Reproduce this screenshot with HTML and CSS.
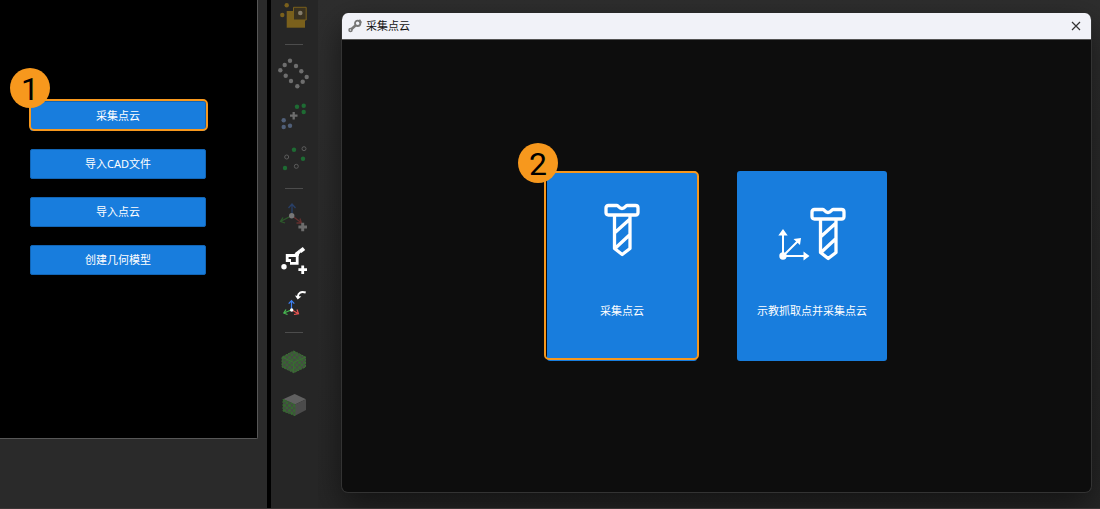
FILE: index.html
```html
<!DOCTYPE html>
<html lang="zh-CN">
<head>
<meta charset="utf-8">
<title>采集点云</title>
<link rel="stylesheet" href="styles.css">
</head>
<body>
<svg class="defs" aria-hidden="true">
  <defs>
    <symbol id="screw" viewBox="0 0 36 54">
      <g fill="none" stroke="#fff" stroke-width="3.300" stroke-linejoin="round">
        <path d="M4.5 2.5H13C14.5 2.500 15 5.500 18 5.500S21.500 2.500 23 2.500H31.500Q34 2.500 34 5V9.500Q34 12 31.500 12H4.500Q2 12 2 9.500V5Q2 2.500 4.500 2.500Z"/>
        <path d="M10.500 12V45.500L18.200 51.500L26 45.500V12M11 29.500L26 16M11.500 45L26 31.500"/>
      </g>
    </symbol>
    <pattern id="mesh" width="5" height="5" patternUnits="userSpaceOnUse">
      <circle cx="1.500" cy="1.500" r="1.500" fill="#35692f"/>
      <circle cx="4" cy="4" r="1.300" fill="#35692f"/>
    </pattern>
  </defs>
</svg>
<div class="app">
  <aside class="sidebar">
    <nav class="model-panel">
      <div class="marked">
        <button class="action" type="button">采集点云</button>
        <span class="badge">1</span>
      </div>
      <button class="action" type="button">导入CAD文件</button>
      <button class="action" type="button">导入点云</button>
      <button class="action" type="button">创建几何模型</button>
    </nav>
  </aside>
  <div class="toolbar" role="toolbar">
    <button class="tool" type="button" aria-label="选择">
      <svg viewBox="0 0 32 32"><g fill="#7a601c"><circle cx="8.700" cy="5.300" r="2.200"/><circle cx="4.300" cy="15" r="2.200"/><path d="M8.700 11H27V27.700H8.700Z"/></g><path d="M15.500 7.300H28.200V20H15.500Z" fill="#3a3220" stroke="#7a601c"/><circle cx="22.300" cy="13" r="2.300" fill="#857d6c"/></svg>
    </button>
    <hr class="rule">
    <button class="tool" type="button" aria-label="点云轮廓">
      <svg viewBox="0 0 32 32" fill="#6e6e6e"><circle cx="12" cy="2.700" r="2.200"/><circle cx="6.700" cy="7" r="2.200"/><circle cx="2.300" cy="12.300" r="2.200"/><circle cx="7.700" cy="17.700" r="2.200"/><circle cx="13" cy="23" r="2.200"/><circle cx="19.300" cy="28.300" r="2.200"/><circle cx="24.700" cy="23.700" r="2.200"/><circle cx="28.700" cy="19" r="2.200"/><circle cx="23.300" cy="13.300" r="2.200"/><circle cx="18" cy="8" r="2.200"/></svg>
    </button>
    <button class="tool" type="button" aria-label="合并点云">
      <svg viewBox="0 0 32 32"><g fill="#1e6b33"><circle cx="19" cy="5.700" r="2.200"/><circle cx="25.700" cy="4.700" r="2.200"/><circle cx="25.700" cy="11" r="2.200"/></g><g fill="#505f78"><circle cx="5.700" cy="19.300" r="2.200"/><circle cx="5.700" cy="26" r="2.200"/><circle cx="12" cy="24.700" r="2.200"/></g><path d="M15.700 11V18.500M12 14.700H19.500" stroke="#6e6e6e" stroke-width="2.300"/></svg>
    </button>
    <button class="tool" type="button" aria-label="点云采样">
      <svg viewBox="0 0 32 32"><g fill="#1e6b33"><circle cx="16" cy="5.700" r="2.200"/><circle cx="25" cy="14.700" r="2.200"/><circle cx="7" cy="24" r="2.200"/></g><g fill="none" stroke="#5c5c5c"><circle cx="26" cy="4.700" r="2"/><circle cx="8.700" cy="13" r="2"/><circle cx="18.300" cy="22.300" r="2"/></g></svg>
    </button>
    <hr class="rule">
    <button class="tool" type="button" aria-label="添加位姿">
      <svg viewBox="0 0 32 32" fill="none" stroke-width="1.300"><path d="M14 13V2M10.500 6L14 2L17.500 6" stroke="#293f66"/><path d="M13 14L2.500 19.500M5 15.500L2.500 19.500L7 21" stroke="#2d5a2b"/><path d="M15 14.500L23 20.500M22 16.500L23.500 21L18.500 21" stroke="#65302f"/><circle cx="13.700" cy="13.700" r="2.700" fill="#777"/><path d="M24.700 20.700V29.300M20.400 25H29" stroke="#6c6c6c" stroke-width="3"/></svg>
    </button>
    <button class="tool" type="button" aria-label="添加机器人位姿">
      <svg viewBox="0 0 32 32" fill="none" stroke="#fff" stroke-width="2.800"><path d="M13 15.500H9.200V10.500H19M19.200 9V18.300H12"/><path d="M17 9L20 11L21.500 7L18 7.500Z" fill="#fff" stroke-width="1"/><path d="M18.500 9L22 6" stroke-width="3"/><path d="M22 6.500L26 3.500" stroke-width="4"/><circle cx="6" cy="21.700" r="2.700" fill="#fff" stroke="none"/><path d="M24.700 20.400V29M20.400 24.700H29"/></svg>
    </button>
    <button class="tool" type="button" aria-label="调整坐标系">
      <svg viewBox="0 0 32 32" fill="none" stroke-width="1.200"><path d="M13.500 21V13M10.700 15.700L13.500 12.700L16.300 15.700" stroke="#3c80f4"/><path d="M13 22L6 25M8 21.500L5.800 25L9.500 26.500" stroke="#48b951"/><path d="M14 22L20 25.500M19 21.500L20.500 25.700L16 26.500" stroke="#e65451"/><circle cx="13.700" cy="22" r="1.700" fill="#fff"/><path d="M27.700 4.500Q20.500 2.300 19.700 9" stroke="#fff" stroke-width="2"/><path d="M17 7.500L19.700 11.500L23.300 8.500Z" fill="#fff"/></svg>
    </button>
    <hr class="rule">
    <button class="tool" type="button" aria-label="体素模型">
      <svg viewBox="0 0 32 32"><path d="M15.700 5L27.500 11V21L15.700 26.700L4 21V11Z" fill="#454d43"/><path d="M15.700 5L27.500 11V21L15.700 26.700L4 21V11Z" fill="url(#mesh)" stroke="#3b6e34" stroke-dasharray="2 1"/><path d="M4 11L15.700 16.500L27.500 11M15.700 16.500V26.500" fill="none" stroke="#3b6e34"/></svg>
    </button>
    <button class="tool" type="button" aria-label="表面模型">
      <svg viewBox="0 0 32 32"><path d="M16.700 5L28 10.300L17 15.500L5 10.300Z" fill="#606060"/><path d="M28 10.300V21L17 26.700V15.500Z" fill="#4b4b4b"/><path d="M5 10.300L17 15.500V26.700L5 22Z" fill="#434b42"/><path d="M5 10.300L17 15.500V26.700L5 22Z" fill="url(#mesh)" stroke="#35692f" stroke-dasharray="2 1"/></svg>
    </button>
  </div>
  <main class="workspace">
    <section class="dialog" role="dialog" aria-labelledby="dialog-title">
      <header class="titlebar">
        <svg class="title-icon" viewBox="0 0 14 14" fill="none" stroke="#777"><circle cx="9.700" cy="4.300" r="2.700" stroke-width="1.800"/><path d="M11 1L13 4M7.500 6.500L3 10.500" stroke-width="2.500"/><circle cx="2.500" cy="11" r="1.500" stroke-width="1.500"/></svg>
        <h1 class="title" id="dialog-title">采集点云</h1>
        <button class="close" type="button" aria-label="关闭"><svg viewBox="0 0 10 10"><path d="M1 1L9 9M9 1L1 9" fill="none" stroke="#333" stroke-width="1.200"/></svg></button>
      </header>
      <div class="choices">
        <div class="marked">
          <button class="card" type="button">
            <svg class="card-icon" viewBox="0 0 68 60"><use href="#screw" x="16" y="0" width="36" height="54"/></svg>
            <span>采集点云</span>
          </button>
          <span class="badge">2</span>
        </div>
        <button class="card" type="button">
          <svg class="card-icon" viewBox="0 0 68 60"><use href="#screw" x="32" y="4" width="36" height="54"/><g fill="#fff" stroke="none"><circle cx="5" cy="53" r="3.700"/><path d="M5 26L9.700 32.500H.3ZM31.500 53L25.500 57.500V48.500ZM23 35L22 42L15.500 36Z"/></g><path d="M5 53V31M5 53H27M5 53L20 38" fill="none" stroke="#fff" stroke-width="2"/></svg>
          <span>示教抓取点并采集点云</span>
        </button>
      </div>
    </section>
  </main>
</div>
</body>
</html>
```

FILE: styles.css
```css
* {
  box-sizing: border-box;
}

body {
  margin: 0;
  background: #2a2a2a;
  color: #fff;
  font: 11px/16px "Noto Sans", "Noto Sans CJK SC", sans-serif;
}

button {
  border: 0;
  padding: 0;
  background: none;
  color: inherit;
  font: inherit;
}

svg {
  display: block;
}

.defs {
  position: absolute;
  width: 0;
  height: 0;
}

.app {
  display: flex;
  min-height: 100vh;
  border-bottom: 1px solid #3a3535;
}

.sidebar {
  flex: none;
  width: 271px;
  padding: 0 9px 69px 0;
  border-right: 4px solid #000;
  background: #2a2a2a;
  display: flex;
}

.model-panel {
  flex: 1;
  display: flex;
  flex-direction: column;
  gap: 18px;
  padding: 101px 51px 0 30px;
  border: solid #575757;
  border-width: 0 1px 1px 0;
  border-bottom-right-radius: 2px;
  background: #000;
}

.action {
  height: 30px;
  border: 1px solid #1265b5;
  border-radius: 2px;
  background: #187ddd;
}

.marked {
  position: relative;
  display: grid;
}

.marked::after {
  content: "";
  position: absolute;
  inset: -2px -2px 0 -1px;
  border: 2px solid #f7981d;
  border-radius: 5px;
}

.badge {
  position: absolute;
  z-index: 1;
  top: -33px;
  left: -20px;
  width: 40px;
  height: 40px;
  border-radius: 50%;
  background: #f7981d;
  color: #000;
  font: 32px/42px Roboto, sans-serif;
  text-align: center;
}

.toolbar {
  flex: none;
  width: 47px;
  padding-right: 1px;
  display: flex;
  flex-direction: column;
  align-items: center;
  gap: 11px;
  background: #262626;
}

.tool {
  width: 32px;
  height: 32px;
}

.rule {
  width: 18px;
  height: 1px;
  margin: 1px 0 2px;
  border: 0;
  background: #4c4c4c;
}

.workspace {
  flex: 1;
  display: flex;
  padding: 13px 8px 15px 23px;
  overflow: hidden;
  background: linear-gradient(#2e2e2e, #262626);
}

.dialog {
  flex: 1;
  display: flex;
  flex-direction: column;
  border: 1px solid #333;
  border-top: 0;
  border-radius: 7px;
  overflow: hidden;
  background: #0d0d0d;
  box-shadow: 0 12px 32px rgba(0, 0, 0, 0.5);
}

.titlebar {
  display: flex;
  align-items: center;
  gap: 4px;
  height: 27px;
  padding: 0 10px 0 6px;
  border-bottom: 1px solid #555;
  background: #f1f2f8;
  color: #111;
}

.title-icon {
  width: 14px;
  height: 14px;
}

.title {
  flex: 1;
  margin: 0;
  font: inherit;
}

.close svg {
  width: 10px;
  height: 10px;
}

.choices {
  flex: 1;
  display: flex;
  align-items: center;
  justify-content: center;
  gap: 40px;
  padding-left: 1px;
}

.choices .marked::after {
  inset: 0 -2px 1px -3px;
}

.choices .badge {
  top: -28px;
  left: -29px;
}

.card {
  display: flex;
  flex-direction: column;
  align-items: center;
  gap: 40px;
  width: 150px;
  height: 190px;
  padding-top: 32px;
  border-radius: 3px;
  background: #187ddd;
}

.card-icon {
  width: 68px;
  height: 60px;
}
```
